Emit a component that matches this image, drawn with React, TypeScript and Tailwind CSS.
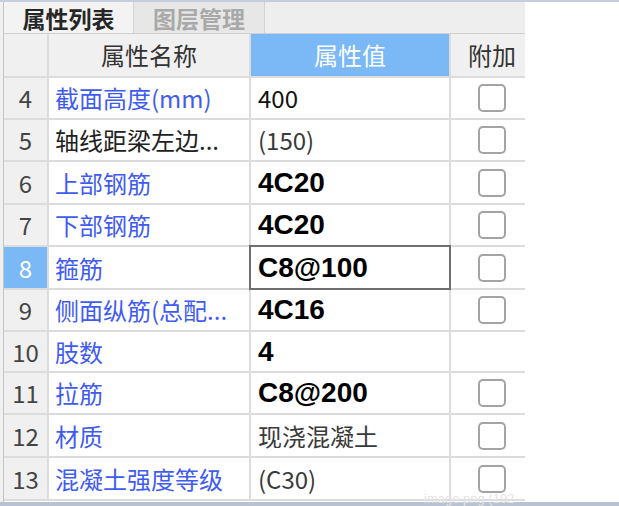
import React from 'react'

type Row = {
    no: number
    name: string
    value: string
    blue: boolean
    bold?: boolean
    check: boolean
    h: string
}

const rows: Row[] = [
    { no: 4, name: '截面高度(mm)', value: '400', blue: true, check: true, h: 'h-[42px]' },
    { no: 5, name: '轴线距梁左边...', value: '(150)', blue: false, check: true, h: 'h-[42px]' },
    { no: 6, name: '上部钢筋', value: '4C20', blue: true, bold: true, check: true, h: 'h-[43px]' },
    { no: 7, name: '下部钢筋', value: '4C20', blue: true, bold: true, check: true, h: 'h-[42px]' },
    { no: 8, name: '箍筋', value: 'C8@100', blue: true, bold: true, check: true, h: 'h-[43px]' },
    { no: 9, name: '侧面纵筋(总配...', value: '4C16', blue: true, bold: true, check: true, h: 'h-[42px]' },
    { no: 10, name: '肢数', value: '4', blue: true, bold: true, check: false, h: 'h-[41px]' },
    { no: 11, name: '拉筋', value: 'C8@200', blue: true, bold: true, check: true, h: 'h-[42px]' },
    { no: 12, name: '材质', value: '现浇混凝土', blue: true, check: true, h: 'h-[43px]' },
    { no: 13, name: '混凝土强度等级', value: '(C30)', blue: true, check: true, h: 'h-[43px]' },
]

function Checkbox() {
    return <div className='w-[28px] h-[28px] rounded-[5px] border-2 border-[#a3a3a3] bg-white'></div>
}

function App() {
    const cjk = { fontFamily: '"Noto Sans CJK SC", "Noto Sans", sans-serif' }
    return (
        <div className='relative w-[619px] h-[506px] bg-white overflow-hidden text-[24px] leading-[30px]' style={cjk}>
            <div className='h-[2px] bg-[#c6cedb]'></div>
            <div className='flex h-[500px]'>
                <div className='w-[3px] bg-[#f0f0f0]'></div>
                <div className='w-[522px] border-l border-[#c4c4c4] overflow-hidden flex flex-col'>
                    {/* tabs */}
                    <div className='flex h-[32px] bg-[#eeeeee] border-b border-[#cfcfcf] shrink-0'>
                        <div className='w-[130px] flex items-center justify-center bg-[#f3f3f3] border-r border-[#d2d2d2] font-bold text-[#262626] text-[23px] leading-[28px]'>属性列表</div>
                        <div className='w-[131px] flex items-center justify-center bg-[#e7e7e7] border-r border-[#d2d2d2] font-bold text-[#a9a9a9] text-[23px] leading-[28px]'>图层管理</div>
                    </div>
                    {/* header */}
                    <div className='flex h-[44px] shrink-0 border-b-2 border-[#dcdcdc] bg-[#f0f0f0]'>
                        <div className='w-[45px] shrink-0 border-r-2 border-[#dcdcdc]'></div>
                        <div className='w-[202px] shrink-0 flex items-center justify-center border-r-2 border-[#dcdcdc] text-[#333]'>属性名称</div>
                        <div className='w-[200px] shrink-0 flex items-center justify-center bg-[#7ab8f6] border-r-2 border-[#dcdcdc] text-white'>属性值</div>
                        <div className='w-[82px] shrink-0 flex items-center justify-center text-[#333]'>附加</div>
                    </div>
                    {rows.map((r) => {
                        const sel = r.no === 8
                        return (
                            <div key={r.no} className={`flex shrink-0 border-b-2 border-[#dcdcdc] ${r.h}`}>
                                <div className={`w-[45px] shrink-0 flex items-center justify-center border-r-2 border-[#dcdcdc] ${sel ? 'bg-[#7ab8f6] text-white' : 'bg-[#f0f0f0] text-[#444]'}`}>{r.no}</div>
                                <div className={`w-[202px] shrink-0 flex items-center pl-[6px] border-r-2 border-[#dcdcdc] whitespace-nowrap ${r.blue ? 'text-[#3f5cf2]' : 'text-[#222]'}`}>{r.name}</div>
                                <div className={`shrink-0 flex items-center ${sel ? 'border-2 border-[#6e6e6e] -my-[2px] -ml-[2px] w-[202px] pl-[7px]' : 'w-[200px] border-r-2 border-[#dcdcdc] pl-[7px]'}`}>
                                    {r.bold ? (
                                        <span className='font-bold text-black text-[28px]' style={{ fontFamily: '"Liberation Sans", sans-serif' }}>{r.value}</span>
                                    ) : (
                                        <span className={r.no === 4 ? 'text-[#111]' : 'text-[#3a3a3a]'}>{r.value}</span>
                                    )}
                                </div>
                                <div className='w-[82px] shrink-0 flex items-center justify-center'>
                                    {r.check && <Checkbox />}
                                </div>
                            </div>
                        )
                    })}
                </div>
                <div className='flex-1 bg-white'></div>
            </div>
            <div className='h-[4px] bg-[#b7c2d2]'></div>
            <div className='absolute left-[424px] top-[492px] text-[13px] leading-none text-[#e4e4e4]' style={{ fontFamily: '"Liberation Sans", sans-serif' }}>image.png (192</div>
        </div>
    )
}

export default App
